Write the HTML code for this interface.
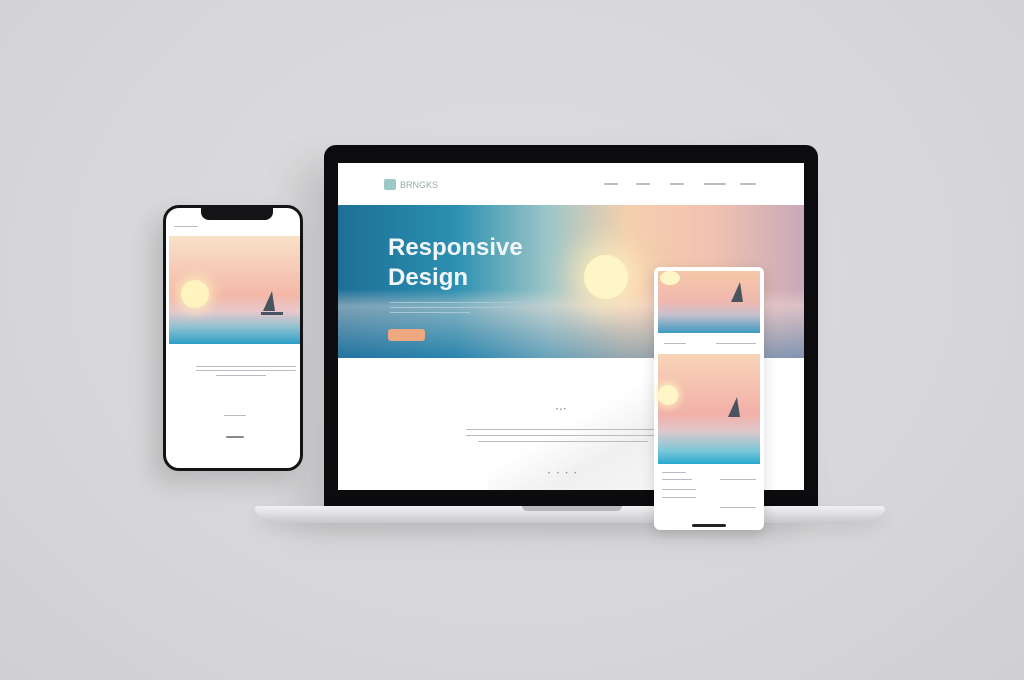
<!DOCTYPE html>
<html><head><style>
body{margin:0;width:1024px;height:680px;background:radial-gradient(ellipse at 50% 40%,#dedee0 0%,#d7d7d9 60%,#d0d0d2 100%);position:relative;overflow:hidden;font-family:"Liberation Sans",sans-serif}
.abs{position:absolute}
.line{position:absolute;height:2px;background:#b8bcc2;border-radius:1px}
.sail{position:absolute;width:0;height:0;border-left:9px solid transparent;border-right:3px solid transparent;border-bottom:20px solid #4a5460}
</style></head><body>
<!-- laptop bezel -->
<div class="abs" style="left:324px;top:145px;width:494px;height:362px;background:#0c0c0e;border-radius:12px 12px 2px 2px;box-shadow:-25px 20px 40px rgba(0,0,0,.12)"></div>
<div class="abs" style="left:338px;top:163px;width:466px;height:327px;background:#fff;overflow:hidden">
  <div class="abs" style="left:46px;top:16px;width:12px;height:11px;background:#9cc8c8;border-radius:2px"></div>
  <div class="abs" style="left:62px;top:17px;font-size:9px;color:#9aa">BRNGKS</div>
  <div class="line" style="left:266px;top:20px;width:14px"></div>
  <div class="line" style="left:298px;top:20px;width:14px"></div>
  <div class="line" style="left:332px;top:20px;width:14px"></div>
  <div class="line" style="left:366px;top:20px;width:22px"></div>
  <div class="line" style="left:402px;top:20px;width:16px"></div>
  <div class="abs" style="left:0;top:42px;width:466px;height:153px;background:linear-gradient(90deg,#1d6f98 0%,#2b8fb0 25%,#9cc6c8 45%,#f4cfae 62%,#f2c2b0 80%,#c8a9b8 100%)"></div>
  <div class="abs" style="left:0;top:42px;width:466px;height:153px;background:linear-gradient(180deg,rgba(255,255,255,0) 0%,rgba(255,255,255,0) 55%,rgba(240,220,215,.45) 66%,rgba(40,120,170,.45) 100%)"></div>
  <div class="abs" style="left:246px;top:92px;width:44px;height:44px;border-radius:50%;background:#fff6c8;box-shadow:0 0 30px 12px rgba(255,240,190,.8)"></div>
  <div class="abs" style="left:50px;top:70px;font-size:24px;font-weight:bold;color:#f2f6f8;line-height:30px">Responsive<br>Design</div>
  <div class="line" style="left:52px;top:139px;width:150px;height:1px;background:#a8c8d8"></div>
  <div class="line" style="left:52px;top:144px;width:130px;height:1px;background:#a8c8d8"></div>
  <div class="line" style="left:52px;top:149px;width:80px;height:1px;background:#a8c8d8"></div>
  <div class="abs" style="left:50px;top:166px;width:37px;height:12px;background:#eea880;border-radius:3px"></div>
  <div class="abs" style="left:150px;top:195px;width:250px;height:132px;background:linear-gradient(150deg,rgba(0,0,0,0) 40%,rgba(0,0,0,.06) 60%,rgba(0,0,0,.02) 100%)"></div>
  <div class="line" style="left:128px;top:266px;width:190px;height:1px"></div>
  <div class="line" style="left:128px;top:272px;width:190px;height:1px"></div>
  <div class="line" style="left:140px;top:278px;width:170px;height:1px"></div>
  <div class="abs" style="left:218px;top:244px;font-size:6px;color:#999">• ▪ •</div>
  <div class="abs" style="left:210px;top:308px;font-size:6px;color:#999">•&nbsp;&nbsp;&nbsp;&nbsp;•&nbsp;&nbsp;&nbsp;&nbsp;•&nbsp;&nbsp;&nbsp;&nbsp;•</div>
</div>
<!-- laptop base -->
<div class="abs" style="left:255px;top:506px;width:630px;height:17px;background:linear-gradient(#f2f2f4,#c8c8cc);border-radius:3px 3px 40px 40px / 3px 3px 14px 14px;box-shadow:0 8px 16px rgba(0,0,0,.08)"></div>
<div class="abs" style="left:522px;top:506px;width:100px;height:5px;background:#b8b8bc;border-radius:0 0 6px 6px"></div>
<!-- left phone -->
<div class="abs" style="left:163px;top:205px;width:134px;height:260px;border:3px solid #141416;border-radius:16px;background:#fff;overflow:hidden;box-shadow:-10px 12px 25px rgba(0,0,0,.15)">
  <div class="abs" style="left:35px;top:0;width:72px;height:12px;background:#141416;border-radius:0 0 8px 8px"></div>
  <div class="line" style="left:8px;top:18px;width:24px;height:1px"></div>
  <div class="abs" style="left:3px;top:28px;width:131px;height:108px;background:linear-gradient(180deg,#f8e2c8 0%,#f4b8a8 55%,#e8c8cc 70%,#8cc0d0 85%,#2e9ec8 100%)"></div>
  <div class="abs" style="left:15px;top:72px;width:28px;height:28px;border-radius:50%;background:#fff4c0;box-shadow:0 0 12px 4px rgba(255,240,190,.8)"></div>
  <div class="sail" style="left:97px;top:83px"></div>
  <div class="abs" style="left:95px;top:104px;width:22px;height:3px;background:#4a5460"></div>
  <div class="line" style="left:30px;top:158px;width:100px;height:1px"></div>
  <div class="line" style="left:30px;top:162px;width:100px;height:1px"></div>
  <div class="line" style="left:50px;top:167px;width:50px;height:1px"></div>
  <div class="line" style="left:58px;top:207px;width:22px;height:1px"></div>
  <div class="line" style="left:60px;top:228px;width:18px;height:2px;background:#888"></div>
</div>
<!-- small phone -->
<div class="abs" style="left:654px;top:267px;width:110px;height:263px;background:#fff;border-radius:6px;box-shadow:0 4px 14px rgba(0,0,0,.15);overflow:hidden">
  <div class="abs" style="left:4px;top:4px;width:102px;height:62px;background:linear-gradient(180deg,#f6c8a8 0%,#f0b8b0 50%,#c8c0cc 70%,#3c9ac0 100%)"></div>
  <div class="abs" style="left:6px;top:4px;width:20px;height:14px;border-radius:50%;background:#fff6c8"></div>
  <div class="sail" style="left:77px;top:15px"></div>
  <div class="line" style="left:10px;top:76px;width:22px;height:1px"></div>
  <div class="line" style="left:62px;top:76px;width:40px;height:1px"></div>
  <div class="abs" style="left:4px;top:87px;width:102px;height:110px;background:linear-gradient(180deg,#f8d4b8 0%,#f2b0a8 55%,#e0c8cc 70%,#7cc8d8 88%,#28a8d0 100%)"></div>
  <div class="abs" style="left:4px;top:118px;width:20px;height:20px;border-radius:50%;background:#fff6c8;box-shadow:0 0 8px 3px rgba(255,240,190,.8)"></div>
  <div class="sail" style="left:74px;top:130px"></div>
  <div class="line" style="left:8px;top:205px;width:24px;height:1px"></div>
  <div class="line" style="left:8px;top:212px;width:30px;height:1px"></div>
  <div class="line" style="left:8px;top:222px;width:34px;height:1px"></div>
  <div class="line" style="left:8px;top:230px;width:34px;height:1px"></div>
  <div class="line" style="left:66px;top:212px;width:36px;height:1px"></div>
  <div class="line" style="left:66px;top:240px;width:36px;height:1px"></div>
  <div class="abs" style="left:38px;top:257px;width:34px;height:3px;background:#222;border-radius:2px"></div>
</div>
</body></html>
